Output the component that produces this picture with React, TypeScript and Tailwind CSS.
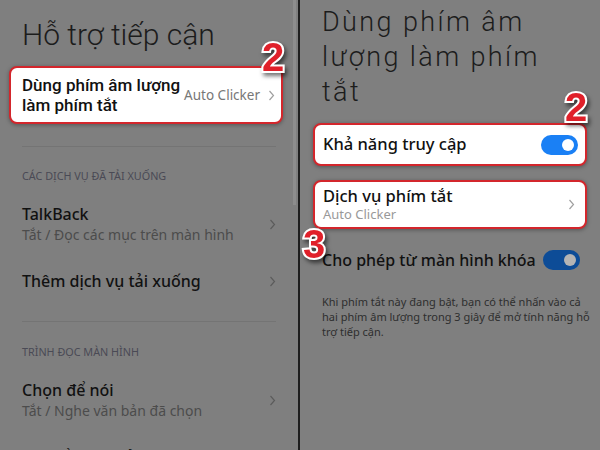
import React from 'react';

const sans = "font-['Noto_Sans',Roboto,sans-serif]";

function Chevron({ color = '#8a8a8a' }: { color?: string }) {
  return (
    <svg width="7" height="11" viewBox="0 0 7 11" fill="none" className="shrink-0">
      <polyline points="1.5,1 5.5,5.5 1.5,10" stroke={color} strokeWidth="1.2" />
    </svg>
  );
}

function Badge({ n, pos }: { n: string; pos: string }) {
  return (
    <span
      className={
        "absolute z-10 font-['Liberation_Sans',Arial,sans-serif] text-[40px] leading-none font-bold text-[#e0202a] [-webkit-text-stroke:4px_white] [paint-order:stroke_fill] drop-shadow-[2px_3px_2px_rgba(0,0,0,0.55)] " +
        pos
      }
    >
      {n}
    </span>
  );
}

function Toggle({ dim = false }: { dim?: boolean }) {
  return (
    <div
      className={
        dim
          ? 'w-[37px] h-[20px] shrink-0 rounded-full bg-[#0d4c97] flex items-center justify-end pr-[4px]'
          : 'w-[37px] h-[20px] shrink-0 rounded-full bg-[#1a80f5] flex items-center justify-end pr-[4px]'
      }
    >
      <div className={dim ? 'w-[12px] h-[12px] rounded-full bg-[#b4b4b4]' : 'w-[12px] h-[12px] rounded-full bg-white'} />
    </div>
  );
}

function Row({ title, sub, h }: { title: string; sub?: string; h: string }) {
  return (
    <div className={`flex items-center pl-[22px] pr-[22px] ${h}`}>
      <div className="flex-1 whitespace-nowrap">
        <div className="text-[16px] leading-[21px] font-medium text-[#111]">{title}</div>
        {sub && <div className="text-[14px] leading-[20px] text-[#4c4c4c]">{sub}</div>}
      </div>
      <Chevron color="#5c5c5c" />
    </div>
  );
}

function Header({ children }: { children: React.ReactNode }) {
  return (
    <div className="h-[32px] pl-[22px] flex items-center text-[10.8px] text-[#4a4a55]">{children}</div>
  );
}

export default function App() {
  return (
    <div className={`w-[600px] h-[450px] overflow-hidden flex bg-[#7f7f7f] ${sans}`}>
      {/* Left screen */}
      <div className="relative w-[298px] shrink-0 overflow-hidden">
        <div className="absolute right-[2px] top-0 w-[3px] h-[205px] bg-[#8d8d8d]" />
        <h1 className="pl-[22px] pt-[17px] font-['Roboto',sans-serif] font-light text-[30px] leading-[36px] text-[#1c1c1c]">
          Hỗ trợ tiếp cận
        </h1>

        <div className="mt-[13px] ml-[9px] w-[274px] h-[58px] bg-white border-2 border-[#d3262c] rounded-[8px] shadow-[0_1px_4px_rgba(0,0,0,0.35)] flex items-center pl-[11px] pr-[6px]">
          <div className="flex-1 min-w-0 whitespace-nowrap font-['Roboto',sans-serif] text-[17px] leading-[20px] font-medium text-[#111]">
            Dùng phím âm lượng
            <br />
            làm phím tắt
          </div>
          <span className="whitespace-nowrap text-[13.5px] text-[#777] mr-[8px]">Auto Clicker</span>
          <Chevron color="#a0a0a0" />
        </div>
        <Badge n="2" pos="left-[262px] top-[37px]" />

        <div className="mt-[22px] mx-[22px] h-px bg-[#747474]" />
        <div className="mt-[13px]">
          <Header>CÁC DỊCH VỤ ĐÃ TẢI XUỐNG</Header>
        </div>
        <Row h="h-[64px]" title="TalkBack" sub="Tắt / Đọc các mục trên màn hình" />
        <Row h="h-[50px]" title="Thêm dịch vụ tải xuống" />

        <div className="mt-[15px] mx-[22px] h-px bg-[#747474]" />
        <div className="mt-[14px]">
          <Header>TRÌNH ĐỌC MÀN HÌNH</Header>
        </div>
        <Row h="h-[64px]" title="Chọn để nói" sub="Tắt / Nghe văn bản đã chọn" />
        <Row h="h-[50px]" title="Chuyển văn bản thành giọng nói" />
      </div>

      {/* Divider */}
      <div className="w-[2px] shrink-0 bg-[#1e1e1e]" />

      {/* Right screen */}
      <div className="relative flex-1">
        <h1 className="pl-[22px] pt-[5px] font-['Roboto',sans-serif] font-light text-[27px] leading-[35px] tracking-[2.4px] text-[#1c1c1c]">
          Dùng phím âm
          <br />
          lượng làm phím
          <br />
          tắt
        </h1>

        <div className="mt-[13px] ml-[13px] w-[274px] h-[43px] bg-white border-2 border-[#d3262c] rounded-[8px] shadow-[0_1px_4px_rgba(0,0,0,0.35)] flex items-center pl-[8px] pr-[7px]">
          <span className="flex-1 text-[16.5px] font-medium text-[#111]">Khả năng truy cập</span>
          <Toggle />
        </div>
        <Badge n="2" pos="left-[265px] top-[87px]" />

        <div className="mt-[14px] ml-[13px] w-[274px] h-[49px] bg-white border-2 border-[#d3262c] rounded-[8px] shadow-[0_1px_4px_rgba(0,0,0,0.35)] flex items-center pl-[8px] pr-[10px]">
          <div className="flex-1">
            <div className="text-[16.5px] leading-[20px] font-medium text-[#111]">Dịch vụ phím tắt</div>
            <div className="text-[13px] leading-[17px] text-[#999]">Auto Clicker</div>
          </div>
          <Chevron color="#a0a0a0" />
        </div>
        <Badge n="3" pos="left-[3px] top-[224px]" />

        <div className="mt-[11px] h-[40px] pl-[22px] pr-[20px] flex items-center">
          <span className="flex-1 text-[16px] font-medium text-[#111]">Cho phép từ màn hình khóa</span>
          <Toggle dim />
        </div>

        <p className="mt-[14px] pl-[22px] pr-[10px] whitespace-nowrap text-[11px] leading-[15px] text-[#2e2e2e]">
          Khi phím tắt này đang bật, bạn có thể nhấn vào cả
          <br />
          hai phím âm lượng trong 3 giây để mở tính năng hỗ
          <br />
          trợ tiếp cận.
        </p>
      </div>
    </div>
  );
}
